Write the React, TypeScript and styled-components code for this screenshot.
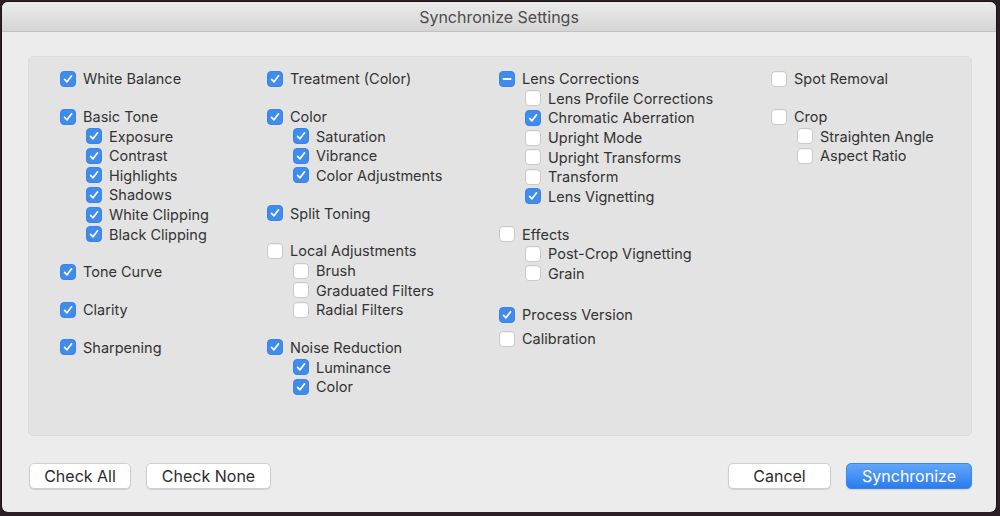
import React from 'react'
import styled, { createGlobalStyle } from 'styled-components'

const GlobalStyle = createGlobalStyle`
	html, body {
		margin: 0;
		padding: 0;
		background: #2a1f24;
	}
	body {
		font-family: Inter, Roboto, 'Liberation Sans', sans-serif;
	}
`

type State = 'on' | 'off' | 'mixed'

type Item = {
	label: string
	state: State
	children?: { label: string; state: State }[]
	gap?: number
}

const columns: Item[][] = [
	[
		{ label: 'White Balance', state: 'on' },
		{
			label: 'Basic Tone',
			state: 'on',
			children: [
				{ label: 'Exposure', state: 'on' },
				{ label: 'Contrast', state: 'on' },
				{ label: 'Highlights', state: 'on' },
				{ label: 'Shadows', state: 'on' },
				{ label: 'White Clipping', state: 'on' },
				{ label: 'Black Clipping', state: 'on' },
			],
		},
		{ label: 'Tone Curve', state: 'on' },
		{ label: 'Clarity', state: 'on' },
		{ label: 'Sharpening', state: 'on' },
	],
	[
		{ label: 'Treatment (Color)', state: 'on' },
		{
			label: 'Color',
			state: 'on',
			children: [
				{ label: 'Saturation', state: 'on' },
				{ label: 'Vibrance', state: 'on' },
				{ label: 'Color Adjustments', state: 'on' },
			],
		},
		{ label: 'Split Toning', state: 'on' },
		{
			label: 'Local Adjustments',
			state: 'off',
			children: [
				{ label: 'Brush', state: 'off' },
				{ label: 'Graduated Filters', state: 'off' },
				{ label: 'Radial Filters', state: 'off' },
			],
		},
		{
			label: 'Noise Reduction',
			state: 'on',
			children: [
				{ label: 'Luminance', state: 'on' },
				{ label: 'Color', state: 'on' },
			],
		},
	],
	[
		{
			label: 'Lens Corrections',
			state: 'mixed',
			children: [
				{ label: 'Lens Profile Corrections', state: 'off' },
				{ label: 'Chromatic Aberration', state: 'on' },
				{ label: 'Upright Mode', state: 'off' },
				{ label: 'Upright Transforms', state: 'off' },
				{ label: 'Transform', state: 'off' },
				{ label: 'Lens Vignetting', state: 'on' },
			],
		},
		{
			label: 'Effects',
			state: 'off',
			children: [
				{ label: 'Post-Crop Vignetting', state: 'off' },
				{ label: 'Grain', state: 'off' },
			],
		},
		{ label: 'Process Version', state: 'on', gap: 22 },
		{ label: 'Calibration', state: 'off', gap: 4 },
	],
	[
		{ label: 'Spot Removal', state: 'off' },
		{
			label: 'Crop',
			state: 'off',
			children: [
				{ label: 'Straighten Angle', state: 'off' },
				{ label: 'Aspect Ratio', state: 'off' },
			],
		},
	],
]

const Window = styled.div`
	margin: 2px 4px 0 2px;
	height: 510px;
	background: #ececec;
	border-radius: 6px;
	overflow: hidden;
	display: flex;
	flex-direction: column;
	box-shadow: 0 0 0 1px rgba(0, 0, 0, 0.35);
`

const TitleBar = styled.div`
	height: 29px;
	flex: none;
	display: flex;
	align-items: center;
	justify-content: center;
	background: linear-gradient(#ebebeb, #d5d5d5);
	border-bottom: 1px solid #c2c2c2;
	color: #4c4c4c;
	font-size: 16px;
`

const Content = styled.div`
	padding: 24px 24px 0 26px;
	display: flex;
	flex-direction: column;
`

const Panel = styled.div`
	height: 380px;
	box-sizing: border-box;
	background: #e3e3e3;
	border: 1px solid #dcdcdc;
	border-radius: 5px;
	padding: 12px 0 0 31px;
	display: grid;
	grid-template-columns: 207px 232px 272px 1fr;
	align-items: start;
`

const Column = styled.div`
	display: flex;
	flex-direction: column;
`

const Group = styled.div<{ $gap: number }>`
	margin-top: ${p => p.$gap}px;
	display: flex;
	flex-direction: column;
`

const Children = styled.div`
	padding-left: 26px;
	display: flex;
	flex-direction: column;
`

const Row = styled.div`
	height: 19.6px;
	display: flex;
	align-items: center;
	gap: 7px;
	color: #333333;
	font-size: 14.5px;
	white-space: nowrap;
`

const Box = styled.span<{ $state: State }>`
	width: 16px;
	height: 16px;
	box-sizing: border-box;
	border-radius: 4px;
	flex: none;
	display: flex;
	align-items: center;
	justify-content: center;
	background: ${p => (p.$state === 'off' ? '#ffffff' : '#3f8cec')};
	border: 1px solid ${p => (p.$state === 'off' ? '#c9c9c9' : '#3a84e4')};
	box-shadow: ${p => (p.$state === 'off' ? 'inset 0 1px 0 rgba(0,0,0,0.04)' : 'none')};
`

const Footer = styled.div`
	margin-top: 27px;
	display: flex;
	align-items: center;
	gap: 15px;
	padding-left: 1px;
`

const Spacer = styled.div`
	flex: 1;
`

const Button = styled.button<{ $primary?: boolean; $w: number }>`
	width: ${p => p.$w}px;
	height: 26px;
	border-radius: 5px;
	font-family: inherit;
	font-size: 16px;
	padding: 0;
	cursor: default;
	color: ${p => (p.$primary ? '#ffffff' : '#2b2b2b')};
	background: ${p => (p.$primary ? 'linear-gradient(#62a6f8, #2a7cef)' : '#ffffff')};
	border: 1px solid ${p => (p.$primary ? '#3b86ee' : '#cfcfcf')};
	box-shadow: 0 1px 1px rgba(0, 0, 0, 0.12);
`

function Check({ state }: { state: State }) {
	return (
		<Box $state={state}>
			{state === 'on' && (
				<svg width="12" height="12" viewBox="0 0 12 12">
					<path d="M2.6 6.3 L5 8.8 L9.6 2.8" fill="none" stroke="#fff" strokeWidth="1.7" strokeLinecap="round" strokeLinejoin="round" />
				</svg>
			)}
			{state === 'mixed' && (
				<svg width="12" height="12" viewBox="0 0 12 12">
					<path d="M2.5 6 H9.5" stroke="#fff" strokeWidth="2" strokeLinecap="round" />
				</svg>
			)}
		</Box>
	)
}

function App() {
	return (
		<>
			<GlobalStyle />
			<Window>
				<TitleBar>Synchronize Settings</TitleBar>
				<Content>
					<Panel>
						{columns.map((col, ci) => (
							<Column key={ci}>
								{col.map((item, i) => (
									<Group key={item.label} $gap={i === 0 ? 0 : item.gap ?? 18.2}>
										<Row>
											<Check state={item.state} />
											{item.label}
										</Row>
										{item.children && (
											<Children>
												{item.children.map(c => (
													<Row key={c.label}>
														<Check state={c.state} />
														{c.label}
													</Row>
												))}
											</Children>
										)}
									</Group>
								))}
							</Column>
						))}
					</Panel>
					<Footer>
						<Button $w={102}>Check All</Button>
						<Button $w={125}>Check None</Button>
						<Spacer />
						<Button $w={103}>Cancel</Button>
						<Button $w={126} $primary>
							Synchronize
						</Button>
					</Footer>
				</Content>
			</Window>
		</>
	)
}

export default App
